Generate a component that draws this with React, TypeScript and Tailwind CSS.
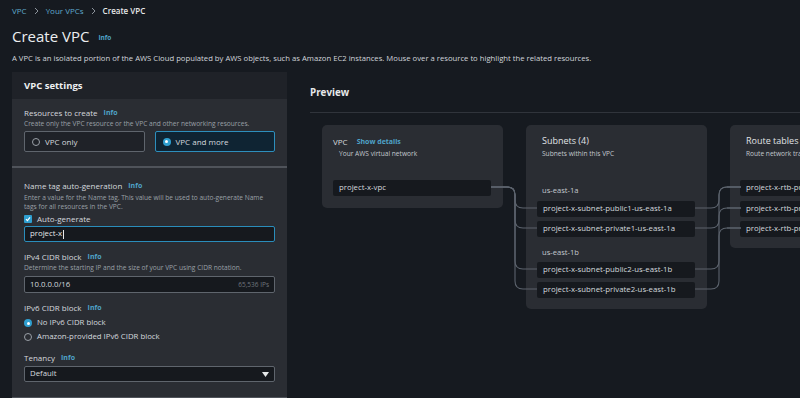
import React from "react";

function Info() {
  return <span className="ml-[6px] text-[7px] font-bold text-[#4fa3c9]">Info</span>;
}

function Label({ text }: { text: string }) {
  return (
    <div className="flex h-[12px] items-center text-[8px] text-[#d5d9de]">
      {text}
      <Info />
    </div>
  );
}

function Desc({ children }: { children: React.ReactNode }) {
  return <div className="text-[6.6px] leading-[9px] text-[#9aa0a7]">{children}</div>;
}

function Radio({ checked }: { checked?: boolean }) {
  return checked ? (
    <span className="flex h-[8px] w-[8px] items-center justify-center rounded-full bg-[#2f9fd0]">
      <span className="h-[3px] w-[3px] rounded-full bg-white" />
    </span>
  ) : (
    <span className="h-[8px] w-[8px] rounded-full border border-[#9aa0a7]" />
  );
}

function Chevron() {
  return (
    <svg className="mx-[7px]" width="5" height="8" viewBox="0 0 5 8" fill="none" stroke="#8c939b" strokeWidth="1">
      <path d="M1 1 L4 4 L1 7" />
    </svg>
  );
}

function Item({ text }: { text: string }) {
  return (
    <div className="flex h-[16px] items-center overflow-hidden whitespace-nowrap rounded-[2px] bg-[#16191e] pl-[6px] text-[7.8px] font-medium text-[#d5d9de]">
      {text}
    </div>
  );
}

function Connectors() {
  const vpcY = 63;
  const subnetYs = [84, 104, 145, 165];
  const routeFor = [63, 84, 63, 104];
  const routeYs = [63, 84, 104];
  return (
    <svg className="pointer-events-none absolute left-0 top-0" width="500" height="200" fill="none" stroke="#5c636d" strokeWidth="1.1">
      {subnetYs.map((y) => (
        <path key={"a" + y} d={`M169 ${vpcY} H185 Q193 ${vpcY} 193 ${vpcY + 8} V${y - 8} Q193 ${y} 201 ${y} H215`} />
      ))}
      {subnetYs.map((y, i) => {
        const t = routeFor[i];
        return <path key={"b" + y} d={`M373 ${y} H389 Q397 ${y} 397 ${y - 8} V${t + 8} Q397 ${t} 405 ${t} H419`} />;
      })}
      {routeYs.map((y) => (
        <path key={"c" + y} d={`M405 ${y} H419`} />
      ))}
    </svg>
  );
}

export default function App() {
  return (
    <div className="h-[398px] w-[800px] overflow-hidden bg-[#161a20] font-['Open_Sans',sans-serif] text-[#d1d5db]">
      <div className="px-3 pt-[4px]">
        <div className="flex h-[14px] items-center text-[8px]">
          <span className="text-[#5fa9cc]">VPC</span>
          <Chevron />
          <span className="text-[#5fa9cc]">Your VPCs</span>
          <Chevron />
          <span className="font-semibold text-[#e6e8ea]">Create VPC</span>
        </div>
        <div className="mt-[7px] flex h-[22px] items-center">
          <span className="text-[15px] text-[#eceef0]">Create VPC</span>
          <span className="ml-[9px] mt-[3px] text-[6.5px] font-bold text-[#4fa3c9]">Info</span>
        </div>
        <div className="mt-[5px] flex h-[12px] items-center pt-px text-[7.7px] text-[#d1d5db]">
          A VPC is an isolated portion of the AWS Cloud populated by AWS objects, such as Amazon EC2 instances. Mouse over a resource to highlight the related resources.
        </div>
      </div>

      <div className="mt-[8px] flex">
        {/* settings panel */}
        <div className="ml-3 w-[275px] shrink-0 bg-[#2a2d33]">
          <div className="flex h-[27px] items-center bg-[#1f2228] px-3 pt-px text-[9.5px] font-bold text-[#eef0f2]">
            VPC settings
          </div>
          <div className="px-3 pb-[14px] pt-[8px]">
            <Label text="Resources to create" />
            <div className="flex h-[10px] items-center text-[6.6px] text-[#9aa0a7]">
              Create only the VPC resource or the VPC and other networking resources.
            </div>
            <div className="mt-[2px] grid grid-cols-2 gap-[10px]">
              <div className="flex h-[21px] items-center gap-[5px] rounded-[2px] border border-[#5f656d] bg-[#1f2228] pl-[7px] text-[8px] text-[#d5d9de]">
                <Radio />
                VPC only
              </div>
              <div className="flex h-[21px] items-center gap-[5px] rounded-[2px] border border-[#2d8fbd] bg-[#0f2433] pl-[7px] text-[8px] text-[#d5d9de]">
                <Radio checked />
                VPC and more
              </div>
            </div>
          </div>
          <div className="h-[2px] bg-[#4f535a]" />
          <div className="px-3 pb-[15px] pt-[12px]">
            <Label text="Name tag auto-generation" />
            <div className="mt-[1px]">
              <Desc>
                Enter a value for the Name tag. This value will be used to auto-generate Name
                <br />
                tags for all resources in the VPC.
              </Desc>
            </div>
            <div className="mt-[3px] flex h-[10px] items-center gap-[5px] text-[8px] text-[#d5d9de]">
              <span className="flex h-[8px] w-[8px] items-center justify-center rounded-[1px] bg-[#2f9fd0]">
                <svg width="6" height="6" viewBox="0 0 6 6" fill="none" stroke="white" strokeWidth="1.2">
                  <path d="M1 3.2 L2.4 4.6 L5 1.4" />
                </svg>
              </span>
              Auto-generate
            </div>
            <div className="mt-[2px] flex h-[16px] items-center rounded-[2px] border border-[#2a8dbb] bg-[#16191e] pl-[5px] text-[7.8px] text-[#e6e8ea]">
              project-x<span className="ml-[1px] h-[9px] w-px bg-[#e6e8ea]" />
            </div>

            <div className="mt-[9px]">
              <Label text="IPv4 CIDR block" />
            </div>
            <div className="flex h-[10px] items-center text-[6.6px] text-[#9aa0a7]">
              Determine the starting IP and the size of your VPC using CIDR notation.
            </div>
            <div className="mt-[3px] flex h-[17px] items-center justify-between rounded-[2px] border border-[#5f656d] bg-[#16191e] px-[5px] text-[7.8px] text-[#d5d9de]">
              <span>10.0.0.0/16</span>
              <span className="text-[6.5px] text-[#6f757d]">65,536 IPs</span>
            </div>

            <div className="mt-[9px]">
              <Label text="IPv6 CIDR block" />
            </div>
            <div className="mt-[4px] flex h-[10px] items-center gap-[5px] text-[7.8px] text-[#d5d9de]">
              <Radio checked />
              No IPv6 CIDR block
            </div>
            <div className="mt-[4px] flex h-[10px] items-center gap-[5px] text-[7.8px] text-[#d5d9de]">
              <Radio />
              Amazon-provided IPv6 CIDR block
            </div>

            <div className="mt-[10px]">
              <Label text="Tenancy" />
            </div>
            <div className="mt-[2px] flex h-[16px] items-center justify-between rounded-[2px] border border-[#5f656d] bg-[#16191e] px-[5px] text-[7.8px] text-[#d5d9de]">
              <span>Default</span>
              <svg width="7" height="5" viewBox="0 0 7 5" fill="#e6e8ea">
                <path d="M0 0 H7 L3.5 5 Z" />
              </svg>
            </div>
          </div>
          <div className="h-[2px] bg-[#4f535a]" />
        </div>

        {/* preview */}
        <div className="min-w-0 flex-1">
          <div className="ml-[23px] flex h-[41px] items-center border-b border-[#30343b] pt-[3px] text-[9.8px] font-bold text-[#e6e8ea]">
            Preview
          </div>
          <div className="relative ml-[35px] mt-[11px] flex items-start gap-[23px] pt-px">
            <div className="w-[181px] shrink-0 rounded-[5px] bg-[#2a2d33] pb-[12px] pl-[11px] pr-[12px] pt-[11px]">
              <div className="flex h-[12px] items-center text-[8px] text-[#d5d9de]">
                VPC
                <span className="ml-[9px] text-[7px] font-bold text-[#4fa3c9]">Show details</span>
              </div>
              <div className="mt-[1px] flex h-[10px] items-center pl-[6px] text-[6.6px] text-[#c3c8ce]">
                Your AWS virtual network
              </div>
              <div className="mt-[21px]">
                <Item text="project-x-vpc" />
              </div>
            </div>

            <div className="w-[181px] shrink-0 rounded-[5px] bg-[#2a2d33] pb-[11px] pl-[11px] pr-[12px] pt-[10px]">
              <div className="flex h-[12px] items-center pl-[5px] text-[9px] text-[#e0e3e6]">Subnets (4)</div>
              <div className="mt-[2px] flex h-[10px] items-center pl-[5px] text-[6.6px] text-[#c3c8ce]">
                Subnets within this VPC
              </div>
              <div className="mt-[27px] flex h-[10px] items-center pl-[5px] text-[7.6px] text-[#c3c8ce]">us-east-1a</div>
              <div className="mt-[5px] flex flex-col gap-[4px]">
                <Item text="project-x-subnet-public1-us-east-1a" />
                <Item text="project-x-subnet-private1-us-east-1a" />
              </div>
              <div className="mt-[11px] flex h-[10px] items-center pl-[5px] text-[7.6px] text-[#c3c8ce]">us-east-1b</div>
              <div className="mt-[4px] flex flex-col gap-[4px]">
                <Item text="project-x-subnet-public2-us-east-1b" />
                <Item text="project-x-subnet-private2-us-east-1b" />
              </div>
            </div>

            <div className="w-[181px] shrink-0 rounded-[5px] bg-[#2a2d33] pb-[11px] pl-[10px] pr-[12px] pt-[10px]">
              <div className="flex h-[12px] items-center whitespace-nowrap pl-[6px] text-[9px] text-[#e0e3e6]">Route tables (3)</div>
              <div className="mt-[2px] flex h-[10px] items-center whitespace-nowrap pl-[6px] text-[6.6px] text-[#c3c8ce]">
                Route network traffic to resources
              </div>
              <div className="mt-[21px] flex flex-col gap-[4.5px]">
                <Item text="project-x-rtb-public" />
                <Item text="project-x-rtb-private1-us-east-1a" />
                <Item text="project-x-rtb-private2-us-east-1b" />
              </div>
            </div>

            <Connectors />
          </div>
        </div>
      </div>
    </div>
  );
}
